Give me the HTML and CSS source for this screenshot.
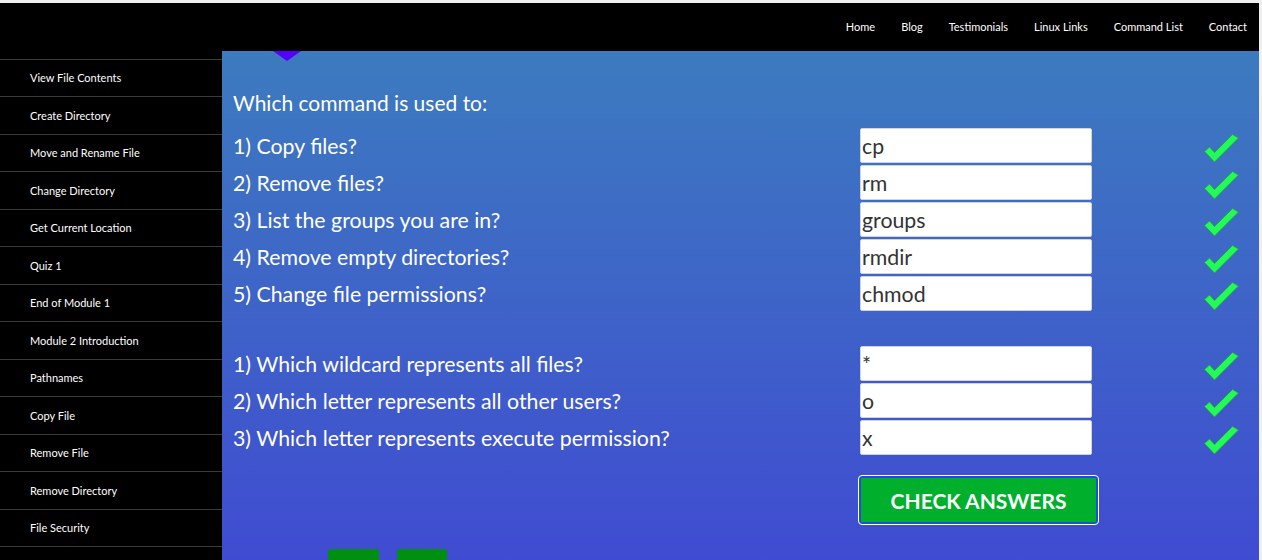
FILE: index.html
```html
<!DOCTYPE html>
<html lang="en">
<head>
<meta charset="utf-8">
<title>Quiz</title>
<link rel="stylesheet" href="styles.css">
</head>
<body>
<div class="page">
  <header class="topbar">
    <nav class="topnav">
      <a href="#">Home</a>
      <a href="#">Blog</a>
      <a href="#">Testimonials</a>
      <a href="#">Linux Links</a>
      <a href="#">Command List</a>
      <a href="#">Contact</a>
    </nav>
  </header>
  <div class="layout">
    <aside class="sidebar">
      <a class="side-item" href="#">View File Contents</a>
      <a class="side-item" href="#">Create Directory</a>
      <a class="side-item" href="#">Move and Rename File</a>
      <a class="side-item" href="#">Change Directory</a>
      <a class="side-item" href="#">Get Current Location</a>
      <a class="side-item" href="#">Quiz 1</a>
      <a class="side-item" href="#">End of Module 1</a>
      <a class="side-item" href="#">Module 2 Introduction</a>
      <a class="side-item" href="#">Pathnames</a>
      <a class="side-item" href="#">Copy File</a>
      <a class="side-item" href="#">Remove File</a>
      <a class="side-item" href="#">Remove Directory</a>
      <a class="side-item" href="#">File Security</a>
      <div class="side-item side-empty"></div>
    </aside>
    <main class="main">
      <div class="pointer"></div>
      <h2 class="heading">Which command is used to:</h2>
      <div class="quiz">
        <div class="q">1) Copy files?</div>
        <input class="answer" type="text" value="cp">
        <svg class="tick" viewBox="0 0 36 30"><path d="M1.5 18.5 L6.5 14 L11.5 19.5 L29.5 1.5 L35.5 5 L11.5 29 Z"/></svg>

        <div class="q">2) Remove files?</div>
        <input class="answer" type="text" value="rm">
        <svg class="tick" viewBox="0 0 36 30"><path d="M1.5 18.5 L6.5 14 L11.5 19.5 L29.5 1.5 L35.5 5 L11.5 29 Z"/></svg>

        <div class="q">3) List the groups you are in?</div>
        <input class="answer" type="text" value="groups">
        <svg class="tick" viewBox="0 0 36 30"><path d="M1.5 18.5 L6.5 14 L11.5 19.5 L29.5 1.5 L35.5 5 L11.5 29 Z"/></svg>

        <div class="q">4) Remove empty directories?</div>
        <input class="answer" type="text" value="rmdir">
        <svg class="tick" viewBox="0 0 36 30"><path d="M1.5 18.5 L6.5 14 L11.5 19.5 L29.5 1.5 L35.5 5 L11.5 29 Z"/></svg>

        <div class="q">5) Change file permissions?</div>
        <input class="answer" type="text" value="chmod">
        <svg class="tick" viewBox="0 0 36 30"><path d="M1.5 18.5 L6.5 14 L11.5 19.5 L29.5 1.5 L35.5 5 L11.5 29 Z"/></svg>
      </div>
      <div class="quiz quiz-second">
        <div class="q">1) Which wildcard represents all files?</div>
        <input class="answer" type="text" value="*">
        <svg class="tick" viewBox="0 0 36 30"><path d="M1.5 18.5 L6.5 14 L11.5 19.5 L29.5 1.5 L35.5 5 L11.5 29 Z"/></svg>

        <div class="q">2) Which letter represents all other users?</div>
        <input class="answer" type="text" value="o">
        <svg class="tick" viewBox="0 0 36 30"><path d="M1.5 18.5 L6.5 14 L11.5 19.5 L29.5 1.5 L35.5 5 L11.5 29 Z"/></svg>

        <div class="q">3) Which letter represents execute permission?</div>
        <input class="answer" type="text" value="x">
        <svg class="tick" viewBox="0 0 36 30"><path d="M1.5 18.5 L6.5 14 L11.5 19.5 L29.5 1.5 L35.5 5 L11.5 29 Z"/></svg>

        <div class="q"></div>
        <button class="check-btn" type="button">CHECK ANSWERS</button>
      </div>
      <div class="pager">
        <a class="pager-btn prev" href="#"></a>
        <a class="pager-btn next" href="#"></a>
      </div>
    </main>
  </div>
</div>
</body>
</html>
```
FILE: styles.css
```css
* { box-sizing: border-box; }

html, body {
  margin: 0;
  padding: 0;
  background: #efefef;
}

body {
  font-family: Lato, "Open Sans", sans-serif;
}

.page {
  padding: 3px 3px 0 0;
  min-height: 100vh;
  display: flex;
  flex-direction: column;
}

.topbar {
  background: #000;
  height: 48px;
  display: flex;
  align-items: center;
  justify-content: flex-end;
  padding-right: 12px;
}

.topnav {
  display: flex;
  gap: 26px;
}

.topnav a {
  color: #fff;
  text-decoration: none;
  font-size: 11px;
  line-height: 14px;
}

.layout {
  flex: 1;
  display: flex;
}

.sidebar {
  width: 222px;
  flex: 0 0 222px;
  background: #000;
  padding-top: 7.5px;
  display: flex;
  flex-direction: column;
}

.side-item {
  display: flex;
  align-items: center;
  height: 37.5px;
  border-top: 1px solid #3a3a3a;
  padding-left: 30px;
  color: #fff;
  text-decoration: none;
  font-size: 11px;
  flex: 0 0 auto;
}

.main {
  flex: 1;
  background: linear-gradient(180deg, #3c7bbf 0%, #4049d2 100%);
  padding: 0 20px 0 11px;
  color: #fff;
}

.pointer {
  width: 0;
  height: 0;
  margin-left: 40px;
  border-left: 14px solid transparent;
  border-right: 14px solid transparent;
  border-top: 10px solid #5500ff;
}

.heading {
  margin: 29px 0 13px;
  font-size: 21px;
  line-height: 25px;
  font-weight: normal;
}

.quiz {
  display: grid;
  grid-template-columns: 1fr 232px 147px;
  grid-auto-rows: 35px;
  row-gap: 2px;
  align-items: center;
}

.quiz-second {
  margin-top: 35px;
  grid-template-rows: 35px 35px 35px 50px;
}

.q {
  font-size: 21.3px;
  line-height: 25px;
  padding-top: 1px;
}

.answer {
  width: 232px;
  height: 35px;
  margin: 0;
  padding: 0 1px;
  border: 1px solid #cfd3dc;
  border-radius: 2px;
  background: #fff;
  color: #333;
  font-family: Lato, "Open Sans", sans-serif;
  font-size: 21.3px;
}

.tick {
  width: 36px;
  height: 30px;
  justify-self: end;
  align-self: end;
}

.tick path {
  fill: #22fb57;
  stroke: #2f9a45;
  stroke-width: 0.8;
  stroke-linejoin: round;
}

.check-btn {
  margin-top: 18px;
  margin-left: -2px;
  width: 241px;
  height: 50px;
  align-self: start;
  border: 1px solid #fff;
  border-radius: 4px;
  box-shadow: inset 0 0 0 2px #1f4fd6;
  background: #00b02c;
  color: #fff;
  font-family: Lato, "Open Sans", sans-serif;
  font-weight: bold;
  font-size: 21px;
  padding: 0;
}

.pager {
  display: flex;
  gap: 18px;
  margin-top: 42px;
  padding-left: 95px;
}

.pager-btn {
  display: block;
  width: 51px;
  height: 34px;
  background: #008f10;
  border-radius: 3px;
}

.pager-btn.next {
  width: 50px;
}
```
